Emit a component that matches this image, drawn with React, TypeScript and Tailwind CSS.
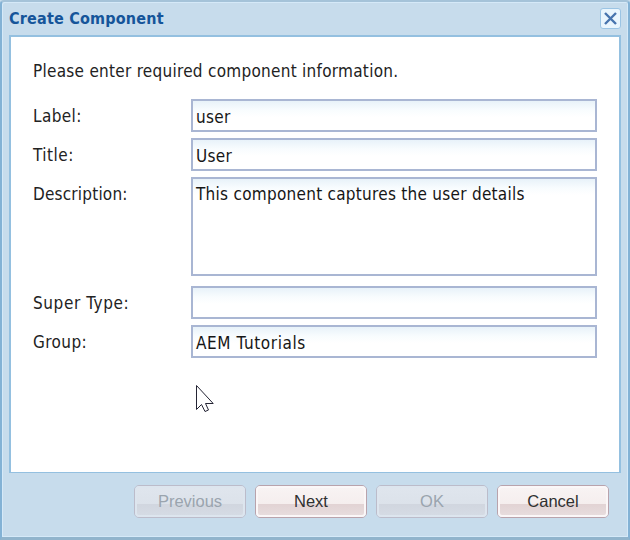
import React from "react";

const tahoma = "font-['DejaVu_Sans_Condensed','DejaVu_Sans',sans-serif] [font-stretch:condensed]";

const inputBox =
  "w-[406px] shrink-0 border-2 border-[#a9b6d3] bg-white bg-[linear-gradient(to_bottom,#e8f2f9_0px,#f8fcfe_9px,#ffffff_16px)] pl-[3px] text-[17px] text-[#161616]";

type FieldProps = {
  label: string;
  value: string;
  spacing: string;
  labelSpacing: string;
  multiline?: boolean;
};

function Field({ label, value, spacing, labelSpacing, multiline }: FieldProps) {
  return (
    <div className="flex items-start">
      <div className={`w-[158px] shrink-0 pt-[6px] text-[17px] leading-[22px] ${labelSpacing}`}>
        <span>{label}</span>
      </div>
      <div className={`${inputBox} ${multiline ? "h-[99px] pt-[4px]" : "h-[33px] pt-[5px]"} leading-[22px] ${spacing}`}>
        <span>{value}</span>
      </div>
    </div>
  );
}

function DialogButton({ label, disabled }: { label: string; disabled?: boolean }) {
  return (
    <button
      type="button"
      className={`h-[33px] w-[112px] rounded-[5px] border p-0 ${
        disabled ? "border-[#bcbcca]" : "border-[#b9a3ac]"
      }`}
    >
      <span
        className={`flex h-full items-center justify-center rounded-[4px] border-2 font-['Liberation_Sans',sans-serif] text-[16.5px] ${
          disabled
            ? "border-[#dde5ee] bg-[linear-gradient(to_bottom,#dfe5ed_0%,#dce2ea_60%,#d1d6df_61%,#d5dbe4_100%)] text-[#9aa4ae]"
            : "border-[#fbf7f8] bg-[linear-gradient(to_bottom,#f8f3f3_0%,#f5eeee_60%,#e2d3d4_61%,#e7dcdd_100%)] text-[#303030]"
        }`}
      >
        {label}
      </span>
    </button>
  );
}

export default function App() {
  return (
    <div className={`flex h-[540px] w-[630px] flex-col overflow-hidden bg-[#c7dcec] ${tahoma}`}>
      <div className="flex h-full flex-col rounded-t-[4px] border-x-2 border-b-[3px] border-t-2 border-x-[#83b2d5] border-t-[#a5c3d9] border-b-[#91b4cc] shadow-[inset_1px_1px_0_#d5e9f8,inset_-1px_-1px_0_#d5e9f8]">
        <header className="flex h-[33px] shrink-0 items-center justify-between pl-[7px] pr-[7px]">
          <h1 className="text-[16px] font-bold leading-[20px] tracking-[0.2px] text-[#15559a]">
            <span>Create Component</span>
          </h1>
          <button
            type="button"
            aria-label="Close"
            className="flex h-[21px] w-[21px] items-center justify-center rounded-[3px] border border-[#9bc4e4] bg-[#e9f5fd]"
          >
            <svg width="15" height="15" viewBox="0 0 15 15" fill="none">
              <path d="M2 2 13 13M13 2 2 13" stroke="#4774ae" strokeWidth="2.4" />
            </svg>
          </button>
        </header>
        <main className="mx-[7px] h-[438px] shrink-0 border-x-2 border-b border-t-2 border-[#94c0e0] bg-white pl-[22px] text-[#222222]">
          <p className="pt-[23px] text-[17px] leading-[22px] tracking-[0.27px]">
            <span>Please enter required component information.</span>
          </p>
          <form className="mt-[17px] flex flex-col gap-[6px]">
            <Field label="Label:" value="user" labelSpacing="tracking-[0.4px]" spacing="tracking-[0.3px]" />
            <Field label="Title:" value="User" labelSpacing="tracking-[0.5px]" spacing="tracking-[0.3px]" />
            <Field
              label="Description:"
              value="This component captures the user details"
              labelSpacing="tracking-[0.2px]"
              spacing="tracking-[0.27px]"
              multiline
            />
            <div className="mt-[4px]">
              <Field label="Super Type:" value="" labelSpacing="tracking-[0.6px]" spacing="" />
            </div>
            <Field label="Group:" value="AEM Tutorials" labelSpacing="tracking-[0.4px]" spacing="tracking-[0.6px]" />
          </form>
          <svg className="ml-[162px] mt-[26px]" width="20" height="30" viewBox="0 0 20 30">
            <path
              d="M1.5 1.5V25.5L6.5 20.5 10 27.5 13.5 26 10.5 19.5H18.2Z"
              fill="white"
              stroke="#242434"
              strokeWidth="1"
            />
          </svg>
        </main>
        <footer className="flex gap-[9px] pl-[132px] pt-[12px]">
          <DialogButton label="Previous" disabled />
          <DialogButton label="Next" />
          <DialogButton label="OK" disabled />
          <DialogButton label="Cancel" />
        </footer>
      </div>
    </div>
  );
}
